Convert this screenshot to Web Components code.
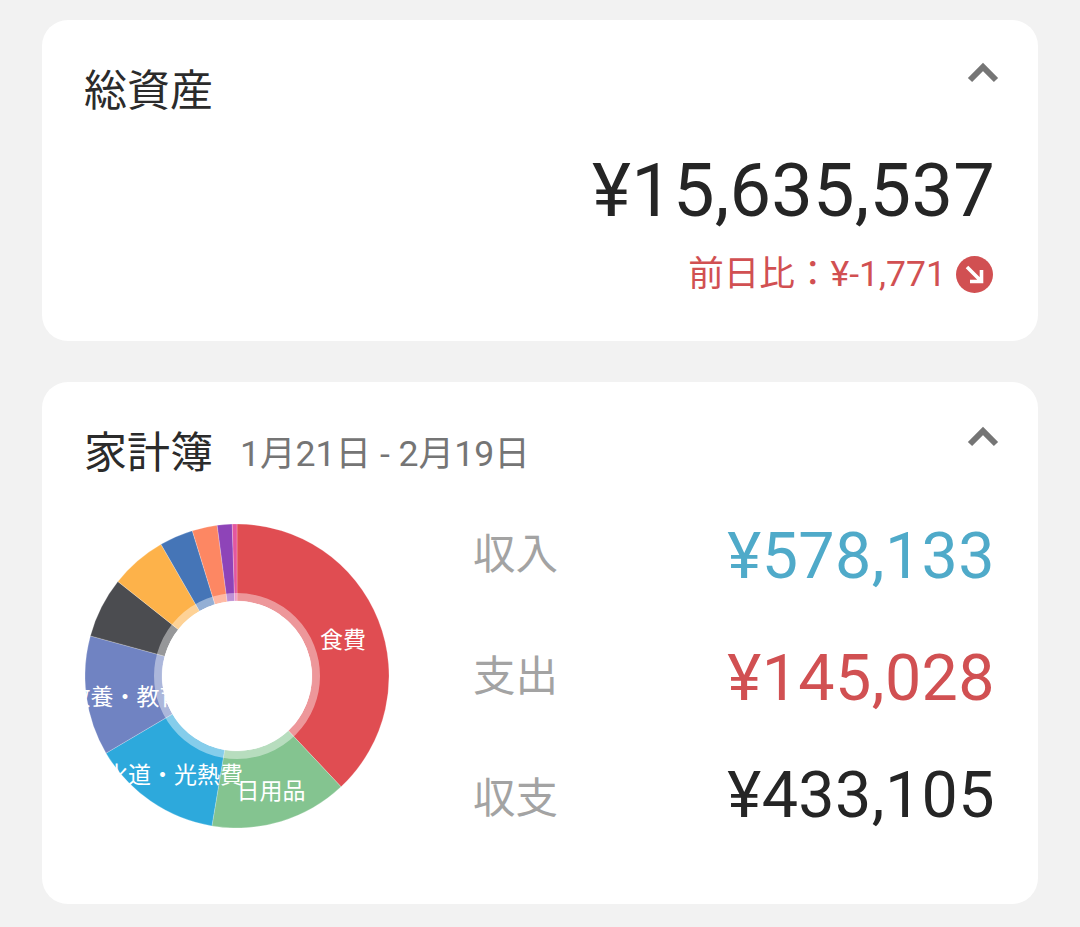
<!DOCTYPE html>
<html lang="ja"><head><meta charset="utf-8"><style>
html,body{margin:0;background:#f2f2f2}
body{font-family:Roboto,"Noto Sans CJK JP",sans-serif;color:#252525}
main{display:flex;flex-direction:column;gap:41px;padding:20px 42px 23px}
</style></head><body><main>
<fold-card heading="総資産" style="--h:321px;--chev:0px">
  <asset-total amount="¥15,635,537" change="前日比：¥-1,771"></asset-total>
</fold-card>
<fold-card heading="家計簿" period="1月21日 - 2月19日" style="--h:522px;--chev:2px">
  <budget-summary>
    <donut-chart slot="chart"></donut-chart>
    <money-row label="収入" value="¥578,133" color="#4faac9" style="--before:1px;--after:60px"></money-row>
    <money-row label="支出" value="¥145,028" color="#d15052" style="--after:55px"></money-row>
    <money-row label="収支" value="¥433,105" color="#252525" style="--label-drop:10px"></money-row>
  </budget-summary>
</fold-card>
</main>
<script>
const JP='Roboto,"Noto Sans CJK JP",sans-serif';
class Base extends HTMLElement{
  render(html){ (this.shadowRoot||this.attachShadow({mode:'open'})).innerHTML=html; }
}
customElements.define('fold-card',class extends Base{connectedCallback(){
  const p=this.getAttribute('period');
  this.render(`<style>
  :host{display:block;box-sizing:border-box;height:var(--h);background:#fff;border-radius:26px;padding:42px 43px 0 43px;font-family:${JP}}
  header{display:flex;justify-content:space-between;height:58px}
  .t{line-height:58px;margin-left:-1px;white-space:nowrap}
  h2{display:inline;margin:0;font-weight:400;font-size:43px;color:#2b2b2b}
  span{font-size:35.6px;color:#757575;margin-left:27px;vertical-align:2px}
  svg{display:block;margin:var(--chev,0) -5px 0 0;align-self:flex-start}
  </style><header><div class="t"><h2>${this.getAttribute('heading')}</h2>${p?`<span>${p}</span>`:''}</div>
  <svg width="34" height="22" viewBox="0 0 34 22"><path d="M4 18 L17 5 L30 18" fill="none" stroke="#757575" stroke-width="6"/></svg></header><slot></slot>`);
}});
customElements.define('asset-total',class extends Base{connectedCallback(){
  this.render(`<style>
  :host{display:flex;flex-direction:column;align-items:flex-end;margin-top:28px}
  .a{font-size:74px;line-height:86px;color:#252525;letter-spacing:.2px}
  .c{display:flex;align-items:center;gap:10px;font-size:35.6px;line-height:48px;color:#d15052;margin-top:16px;padding-right:2px}
  svg{display:block}
  </style><div class="a">${this.getAttribute('amount')}</div>
  <div class="c"><span>${this.getAttribute('change')}</span>
  <svg width="37" height="37" viewBox="0 0 37 37"><circle cx="18.5" cy="18.5" r="18.5" fill="#d15052"/><path d="M11 11 L25 25 M14 25.5 H25.5 V14" fill="none" stroke="#fff" stroke-width="3.6"/></svg></div>`);
}});
customElements.define('budget-summary',class extends Base{connectedCallback(){
  this.render(`<style>
  :host{display:grid;grid-template-columns:304px 1fr;column-gap:84px;margin-top:42px}
  .r{display:flex;flex-direction:column}
  </style><slot name="chart"></slot><div class="r"><slot></slot></div>`);
}});
customElements.define('money-row',class extends Base{connectedCallback(){
  this.render(`<style>
  :host{display:flex;align-items:center;justify-content:space-between;height:62px;margin:var(--before,0) 0 var(--after,0);font-family:${JP}}
  .l{font-size:42.5px;color:#a3a3a3;padding:var(--label-drop,0) 0 12px}
  .v{font-size:64.6px;color:${this.getAttribute('color')};letter-spacing:.4px}
  </style><span class="l">${this.getAttribute('label')}</span><span class="v">${this.getAttribute('value')}</span>`);
}});
customElements.define('donut-chart',class extends Base{connectedCallback(){
  const c=152,R=152,r=75;
  const segs=[[0,136.8,'#e04d52'],[136.8,189.5,'#84c490'],[189.5,239.5,'#2da9dc'],[239.5,285.3,'#7083c2'],[285.3,308.4,'#4b4c50'],[308.4,330,'#fdb24a'],[330,342.9,'#4575b7'],[342.9,352.5,'#fd8763'],[352.5,358.2,'#8e44b8'],[358.2,360,'#e4579f']];
  const pt=(a,q)=>{const t=a*Math.PI/180;return (c+q*Math.sin(t)).toFixed(2)+' '+(c-q*Math.cos(t)).toFixed(2)};
  const paths=segs.map(([a,b,f])=>`<path d="M${pt(a,R)} A${R} ${R} 0 ${b-a>180?1:0} 1 ${pt(b,R)} L${pt(b,r)} A${r} ${r} 0 ${b-a>180?1:0} 0 ${pt(a,r)}Z" fill="${f}" stroke="#fff" stroke-opacity=".45" stroke-width=".5"/>`).join('');
  const labels=[['食費',258,124],['日用品',186,275],['水道・光熱費',89,259],['教養・教育',40,181]];
  this.render(`<style>
  :host{display:block;width:304px;height:304px}
  svg{display:block;overflow:hidden}
  text{font:23px ${JP};fill:#fff;text-anchor:middle}
  </style><svg width="304" height="304" viewBox="0 0 304 304">${paths}
  <circle cx="152" cy="152" r="79" fill="none" stroke="#fff" stroke-opacity=".42" stroke-width="8"/>
  <circle cx="152" cy="152" r="75" fill="#fff"/>
  ${labels.map(([t,x,y])=>`<text x="${x}" y="${y}">${t}</text>`).join('')}
  </svg>`);
}});
</script></body></html>
